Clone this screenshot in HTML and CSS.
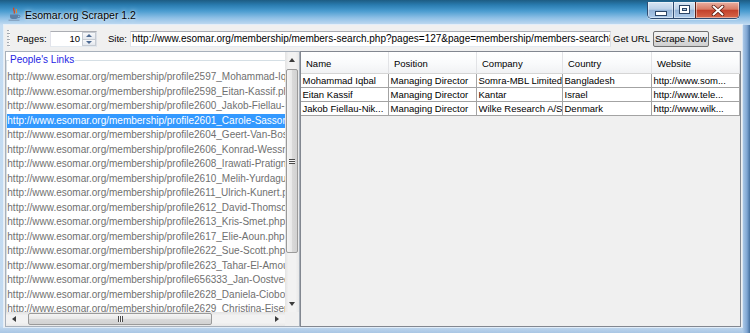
FILE: index.html
```html
<!DOCTYPE html>
<html>
<head>
<meta charset="utf-8">
<title>Esomar.org Scraper 1.2</title>
<link rel="stylesheet" href="styles.css">
</head>
<body>
<div class="window">
  <div class="titlebar">
    <svg class="app-icon" width="13" height="14" viewBox="0 0 13 14">
      <path d="M6 0.8 C4 3 8 4 6 6.6" fill="none" stroke="#e0421b" stroke-width="1.3"/>
      <path d="M8.6 2 C7.2 3.5 9.6 4.5 8.2 6.2" fill="none" stroke="#f08a24" stroke-width="1"/>
      <path d="M2 7.5 H10 V9.5 Q10 12 7.5 12 H4.5 Q2 12 2 9.5 Z" fill="#5b7fa6"/>
      <path d="M10 8.2 Q12.5 8 12 9.8 Q11.5 11 9.8 10.6" fill="none" stroke="#5b7fa6" stroke-width="1"/>
      <path d="M0.5 13.2 H11.5" stroke="#7d96b3" stroke-width="1"/>
    </svg>
    <span class="title">Esomar.org Scraper 1.2</span>
    <div class="controls">
      <div class="ctl ctl-min"><span class="sym-min"></span></div>
      <div class="ctl ctl-max"><span class="sym-max"></span></div>
      <div class="ctl ctl-close">
        <svg width="14" height="11" viewBox="0 0 14 11">
          <path d="M2.5 1.5 L11.5 9.5 M11.5 1.5 L2.5 9.5" stroke="#5a1a10" stroke-width="3.6" stroke-linecap="round"/>
          <path d="M2.5 1.5 L11.5 9.5 M11.5 1.5 L2.5 9.5" stroke="#ffffff" stroke-width="2" stroke-linecap="round"/>
        </svg>
      </div>
    </div>
  </div>

  <div class="client">
    <div class="toolbar">
      <div class="grip"></div>
      <span class="lbl lbl-pages">Pages:</span>
      <div class="spinner">
        <span class="spin-val">10</span>
        <div class="spin-btns">
          <div class="spin-btn"><span class="arr-up"></span></div>
          <div class="spin-btn"><span class="arr-down"></span></div>
        </div>
      </div>
      <span class="lbl lbl-site">Site:</span>
      <div class="field">http://www.esomar.org/membership/members-search.php?pages=127&amp;page=membership/members-search8</div>
      <span class="tbtn tb-get">Get URL</span>
      <span class="tbtn tb-scrape">Scrape Now</span>
      <span class="tbtn tb-save">Save</span>
    </div>

    <div class="split">
      <div class="left-pane">
        <div class="viewport">
          <fieldset class="titled">
            <legend>People's Links</legend>
            <ul class="list">
              <li>http://www.esomar.org/membership/profile2597_Mohammad-Iqbal.php</li>
              <li>http://www.esomar.org/membership/profile2598_Eitan-Kassif.php</li>
              <li>http://www.esomar.org/membership/profile2600_Jakob-Fiellau-Nikolajsen.php</li>
              <li class="sel">http://www.esomar.org/membership/profile2601_Carole-Sasson.php</li>
              <li>http://www.esomar.org/membership/profile2604_Geert-Van-Bosch.php</li>
              <li>http://www.esomar.org/membership/profile2606_Konrad-Wessner.php</li>
              <li>http://www.esomar.org/membership/profile2608_Irawati-Pratignyo.php</li>
              <li>http://www.esomar.org/membership/profile2610_Melih-Yurdagul.php</li>
              <li>http://www.esomar.org/membership/profile2611_Ulrich-Kunert.php</li>
              <li>http://www.esomar.org/membership/profile2612_David-Thomson.php</li>
              <li>http://www.esomar.org/membership/profile2613_Kris-Smet.php</li>
              <li>http://www.esomar.org/membership/profile2617_Elie-Aoun.php</li>
              <li>http://www.esomar.org/membership/profile2622_Sue-Scott.php</li>
              <li>http://www.esomar.org/membership/profile2623_Tahar-El-Amouri.php</li>
              <li>http://www.esomar.org/membership/profile656333_Jan-Oostveen.php</li>
              <li>http://www.esomar.org/membership/profile2628_Daniela-Ciobotaru.php</li>
              <li>http://www.esomar.org/membership/profile2629_Christina-Eisenberg.php</li>
              <li>http://www.esomar.org/membership/profile2630_Peter-Smith.php</li>
            </ul>
          </fieldset>
        </div>
        <div class="vscroll">
          <div class="sb-btn"><span class="arr-up dark"></span></div>
          <div class="vtrack">
            <div class="vthumb"><span class="grip-h"></span></div>
          </div>
          <div class="sb-btn"><span class="arr-down dark"></span></div>
        </div>
        <div class="hscroll">
          <div class="sb-btn-h"><span class="arr-left"></span></div>
          <div class="htrack">
            <div class="hthumb"><span class="grip-v"></span></div>
          </div>
          <div class="sb-btn-h"><span class="arr-right"></span></div>
        </div>
        <div class="corner"></div>
      </div>

      <div class="right-pane">
        <div class="grid-table">
          <div class="trow thead">
            <div class="th">Name</div>
            <div class="th">Position</div>
            <div class="th">Company</div>
            <div class="th">Country</div>
            <div class="th">Website</div>
          </div>
          <div class="trow">
            <div class="td">Mohammad Iqbal</div>
            <div class="td">Managing Director</div>
            <div class="td">Somra-MBL Limited</div>
            <div class="td">Bangladesh</div>
            <div class="td">http://www.som...</div>
          </div>
          <div class="trow">
            <div class="td">Eitan Kassif</div>
            <div class="td">Managing Director</div>
            <div class="td">Kantar</div>
            <div class="td">Israel</div>
            <div class="td">http://www.tele...</div>
          </div>
          <div class="trow">
            <div class="td">Jakob Fiellau-Nik...</div>
            <div class="td">Managing Director</div>
            <div class="td">Wilke Research A/S</div>
            <div class="td">Denmark</div>
            <div class="td">http://www.wilk...</div>
          </div>
        </div>
      </div>
    </div>
  </div>
</div>
</body>
</html>
```

FILE: styles.css
```css
* { box-sizing: border-box; }
html, body { margin: 0; padding: 0; }
body {
  width: 750px;
  height: 333px;
  overflow: hidden;
  font-family: "Liberation Sans", Arial, sans-serif;
  background: #c3daf0;
}

.window {
  width: 750px;
  height: 333px;
  display: flex;
  flex-direction: column;
  background:
    linear-gradient(to right, rgba(0,0,0,0) 742px, #b4cfea 742px, #7fa6d3 747px, #45709f 750px) no-repeat 0 25px / 750px 308px,
    linear-gradient(to bottom, #1d5c83 0px, #2a7cb0 5px, #4a9cd0 11px, #8fc0e6 18px, #c4dcf2 25px, #c3daf0 326px, #a9c6e4 333px);
}

/* ---------- title bar ---------- */
.titlebar {
  height: 25px;
  flex: none;
  display: flex;
  align-items: flex-start;
}
.app-icon { margin: 7px 0 0 8px; flex: none; }
.title {
  margin: 9px 0 0 4px;
  font-size: 10.5px;
  line-height: 12px;
  color: #000;
  text-shadow: 0 0 5px rgba(255,255,255,0.85), 0 0 2px rgba(255,255,255,0.6);
  white-space: nowrap;
}
.controls {
  margin: 2px 10px 0 auto;
  display: flex;
  height: 17px;
  border: 1px solid #2f4b70;
  border-top: none;
  border-radius: 0 0 5px 5px;
  overflow: hidden;
  box-shadow: 0 1px 0 rgba(255,255,255,0.6);
}
.ctl {
  height: 16px;
  display: flex;
  align-items: center;
  justify-content: center;
  box-shadow: inset 0 0 0 1px rgba(255,255,255,0.45);
}
.ctl-min {
  width: 26px;
  border-right: 1px solid #2f4b70;
  background: linear-gradient(#d9e6f4 0%, #bcd1e8 45%, #94b3d7 52%, #aecbea 100%);
}
.ctl-max {
  width: 22px;
  border-right: 1px solid #5a1d14;
  background: linear-gradient(#d9e6f4 0%, #bcd1e8 45%, #94b3d7 52%, #aecbea 100%);
}
.ctl-close {
  width: 43px;
  background: linear-gradient(#eab0a2 0%, #d87c66 45%, #c3412b 52%, #d8674a 100%);
}
.sym-min {
  width: 10px;
  height: 3px;
  margin-top: 6px;
  background: #fff;
  box-shadow: 0 0 0 1px #2c4566;
}
.sym-max {
  width: 9px;
  height: 7px;
  margin-top: -1px;
  border: 2px solid #fff;
  border-top-width: 2px;
  box-shadow: 0 0 0 1px #2c4566, inset 0 0 0 1px #2c4566;
}

/* ---------- client ---------- */
.client {
  flex: 1;
  margin: 0 8px 6px 4px;
  background: #f0f0f0;
  display: flex;
  flex-direction: column;
  min-height: 0;
  box-shadow: 0 0 0 1px rgba(255,255,255,0.55);
}

.toolbar {
  height: 26px;
  flex: none;
  display: flex;
  align-items: flex-start;
  padding: 6px 0 0 3px;
  font-size: 9.5px;
  color: #000;
}
.grip {
  width: 3px;
  height: 17px;
  margin-top: -1px;
  background: repeating-linear-gradient(to bottom, #a4a9b0 0 1px, transparent 1px 3px);
  border-right: 1px dotted #ffffff;
}
.lbl { height: 16px; line-height: 16px; white-space: nowrap; flex: none; }
.lbl-pages { width: 33px; margin-left: 7px; }
.lbl-site { width: 22px; margin-left: 11px; }

.spinner {
  width: 47px;
  height: 16px;
  flex: none;
  display: flex;
  background: #fff;
  border: 1px solid #abadb3;
  border-right-color: #dbdfe6;
  border-bottom-color: #e3e9ef;
  border-left-color: #e2e3ea;
}
.spin-val {
  flex: 1;
  text-align: right;
  padding-right: 2px;
  line-height: 14px;
}
.spin-btns {
  width: 14px;
  display: flex;
  flex-direction: column;
}
.spin-btn {
  flex: 1;
  display: flex;
  align-items: center;
  justify-content: center;
  border: 1px solid #c6cbd2;
  background: linear-gradient(#f7f8fa, #e4e8ee);
}
.spin-btn + .spin-btn { border-top: none; }

.arr-up, .arr-down, .arr-left, .arr-right { width: 0; height: 0; display: block; }
.arr-up { border-left: 3px solid transparent; border-right: 3px solid transparent; border-bottom: 3px solid #4d6a92; }
.arr-down { border-left: 3px solid transparent; border-right: 3px solid transparent; border-top: 3px solid #4d6a92; }
.arr-up.dark { border-left-width: 3.5px; border-right-width: 3.5px; border-bottom: 4px solid #3c3c3c; }
.arr-down.dark { border-left-width: 3.5px; border-right-width: 3.5px; border-top: 4px solid #3c3c3c; }
.arr-left { border-top: 3.5px solid transparent; border-bottom: 3.5px solid transparent; border-right: 4px solid #3c3c3c; }
.arr-right { border-top: 3.5px solid transparent; border-bottom: 3.5px solid transparent; border-left: 4px solid #3c3c3c; }

.field {
  width: 481px;
  height: 16px;
  flex: none;
  background: #fff;
  border: 1px solid #abadb3;
  border-right-color: #dbdfe6;
  border-bottom-color: #e3e9ef;
  border-left-color: #e2e3ea;
  font-size: 10px;
  line-height: 14px;
  padding-left: 1px;
  white-space: nowrap;
  overflow: hidden;
}
.tbtn {
  height: 16px;
  line-height: 16px;
  flex: none;
  white-space: nowrap;
  overflow: hidden;
}
.tb-get { width: 38px; margin-left: 2px; }
.tb-scrape {
  width: 56px;
  margin-left: 2px;
  line-height: 14px;
  padding-left: 1px;
  border: 1px solid #707070;
  border-radius: 2px;
  background: linear-gradient(#f2f2f2 0%, #ebebeb 48%, #dddddd 52%, #cfcfcf 100%);
}
.tb-save { width: 24px; margin-left: 3px; }

/* ---------- split panes ---------- */
.split {
  flex: 1;
  min-height: 0;
  display: flex;
  padding-left: 1px;
}
.left-pane {
  width: 295px;
  flex: none;
  display: grid;
  grid-template-columns: 279px 14px;
  grid-template-rows: 260px 14px;
  border: 1px solid #a7b0bb;
  background: #fff;
}
.viewport {
  overflow: hidden;
  background: #fff;
}
.titled {
  margin: 0;
  padding: 0;
  min-width: 0;
  border: 1px solid #d5dfe5;
  border-right: none;
  border-bottom: none;
}
.titled legend {
  margin-left: 2px;
  padding: 0 1px;
  font-size: 10px;
  line-height: 16px;
  color: #2424e4;
}
.list {
  list-style: none;
  margin: 0;
  padding: 2px 0 0 0;
  font-size: 10px;
  color: #707070;
}
.list li {
  height: 14.5px;
  line-height: 14.5px;
  white-space: nowrap;
  padding-left: 0.3px;
}
.list li.sel {
  background: #3399ff;
  color: #ffffff;
}

.vscroll {
  display: flex;
  flex-direction: column;
  background: linear-gradient(to right, #e3e3e3, #f2f2f2 25%, #f2f2f2 75%, #e8e8e8);
}
.sb-btn {
  height: 16px;
  flex: none;
  display: flex;
  align-items: center;
  justify-content: center;
}
.vtrack { flex: 1; padding: 1px 1px 0 1px; }
.vthumb {
  height: 184px;
  border: 1px solid #9a9a9a;
  border-radius: 2px;
  background: linear-gradient(to right, #f5f5f5 0%, #e9e9e9 48%, #d9d9d9 52%, #d2d2d2 100%);
  display: flex;
  align-items: center;
  justify-content: center;
}
.grip-h {
  width: 6px;
  height: 5px;
  background: repeating-linear-gradient(to bottom, #4b4b4b 0 1px, #f5f5f5 1px 2px);
}
.hscroll {
  display: flex;
  background: linear-gradient(to bottom, #e3e3e3, #f2f2f2 25%, #f2f2f2 75%, #e8e8e8);
}
.sb-btn-h {
  width: 16px;
  flex: none;
  display: flex;
  align-items: center;
  justify-content: center;
}
.htrack { flex: 1; padding: 1px 0 0 6px; }
.hthumb {
  width: 184px;
  height: 12px;
  border: 1px solid #9a9a9a;
  border-radius: 2px;
  background: linear-gradient(to bottom, #f5f5f5 0%, #e9e9e9 48%, #d9d9d9 52%, #d2d2d2 100%);
  display: flex;
  align-items: center;
  justify-content: center;
}
.grip-v {
  width: 5px;
  height: 6px;
  background: repeating-linear-gradient(to right, #4b4b4b 0 1px, #f5f5f5 1px 2px);
}
.corner { background: #f0f0f0; }

.right-pane {
  width: 441px;
  flex: none;
  border: 1px solid #828790;
  background: #f0f0f0;
  overflow: hidden;
}
.grid-table { width: 439px; }
.trow {
  display: grid;
  grid-template-columns: 88px 88px 86px 89px 88px;
}
.th {
  height: 22px;
  padding: 2px 0 0 5px;
  line-height: 19px;
  font-size: 9.5px;
  color: #000;
  border-right: 1px solid #e2e3e6;
  border-bottom: 1px solid #d5d5d5;
  background: linear-gradient(#ffffff 0%, #fafbfc 50%, #f1f2f4 100%);
  white-space: nowrap;
  overflow: hidden;
}
.td {
  height: 14px;
  padding: 1px 0 0 1.5px;
  line-height: 12px;
  font-size: 9.5px;
  color: #000;
  background: #fff;
  border-right: 1px solid #a3a3a3;
  border-bottom: 1px solid #a3a3a3;
  white-space: nowrap;
  overflow: hidden;
}
```
